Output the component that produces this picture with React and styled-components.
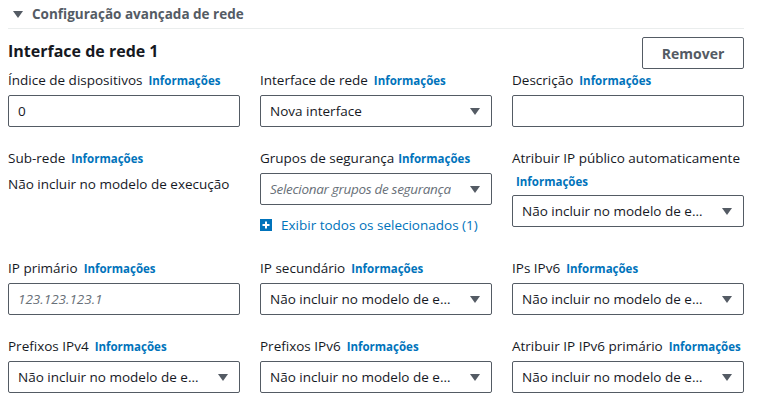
import React from "react";
import styled, { createGlobalStyle } from "styled-components";

const GlobalStyle = createGlobalStyle`
    body {
        margin: 0;
        background: #ffffff;
        font-family: "Open Sans", "Noto Sans", sans-serif;
        color: #16191f;
    }
`;

const Page = styled.div`
    padding: 0 21px 0 8px;
`;

const SectionToggle = styled.div`
    display: flex;
    align-items: center;
    gap: 9px;
    height: 28px;
    padding-left: 5px;
    border-bottom: 1px solid #eaeded;
    font-size: 13.5px;
    font-weight: 700;
    color: #545b64;
`;

const Caret = styled.span`
    width: 0;
    height: 0;
    border-left: 5px solid transparent;
    border-right: 5px solid transparent;
    border-top: 7px solid #545b64;
    margin-top: 1px;
`;

const HeaderRow = styled.div`
    display: flex;
    justify-content: space-between;
    align-items: flex-start;
    padding-top: 8px;
    height: 32px;
`;

const Title = styled.h2`
    margin: 0;
    margin-top: 2px;
    font-size: 16px;
    line-height: 24px;
    font-weight: 700;
    color: #16191f;
`;

const Button = styled.button`
    width: 102px;
    height: 32px;
    border: 1px solid #545b64;
    border-radius: 2px;
    background: #ffffff;
    color: #545b64;
    font-family: inherit;
    font-size: 14px;
    font-weight: 700;
    cursor: pointer;
`;

const Grid = styled.div`
    display: grid;
    grid-template-columns: repeat(3, 232px);
    column-gap: 20px;
    row-gap: 20px;
`;

const Field = styled.div`
    display: flex;
    flex-direction: column;
`;

const Label = styled.div`
    height: ${(p) => (p.$wrap ? "46px" : "22px")};
    font-size: 13.5px;
    line-height: ${(p) => (p.$wrap ? "23px" : "22px")};
    margin-bottom: ${(p) => (p.$wrap ? "2px" : "4px")};
    color: #16191f;
    white-space: nowrap;
`;

const Info = styled.a`
    display: ${(p) => (p.$block ? "block" : "inline")};
    margin-left: ${(p) => (p.$block ? "4px" : "6px")};
    line-height: ${(p) => (p.$block ? "23px" : "1")};
    font-size: 11.5px;
    font-weight: 700;
    color: #0073bb;
    text-decoration: none;
`;

const Input = styled.div`
    box-sizing: border-box;
    height: 32px;
    border: 1px solid #545b64;
    border-radius: 2px;
    padding: 0 9px;
    display: flex;
    align-items: center;
    font-size: 13.5px;
    color: ${(p) => (p.$placeholder ? "#687078" : "#16191f")};
    font-style: ${(p) => (p.$placeholder ? "italic" : "normal")};
`;

const Select = styled(Input)`
    justify-content: space-between;
    padding-right: 11px;
    gap: ${(p) => (p.$placeholder ? "8px" : "14px")};
`;

const SelectText = styled.span`
    overflow: hidden;
    text-overflow: ellipsis;
    white-space: nowrap;
    letter-spacing: ${(p) => (p.$tight ? "-0.3px" : "0")};
`;

const Arrow = styled.span`
    flex: none;
    width: 0;
    height: 0;
    border-left: 5px solid transparent;
    border-right: 5px solid transparent;
    border-top: 7px solid #545b64;
`;

const StaticValue = styled.div`
    font-size: 13.5px;
    line-height: 22px;
`;

const ExpandLink = styled.div`
    display: flex;
    align-items: center;
    gap: 9px;
    margin-top: 9px;
    padding-bottom: 1px;
    font-size: 13.5px;
    line-height: 22px;
    color: #0073bb;
`;

const PlusBox = () => (
    <svg width="12" height="12" viewBox="0 0 12 12">
        <rect width="12" height="12" fill="#0073bb" />
        <path d="M6 2.5v7M2.5 6h7" stroke="#fff" strokeWidth="2" />
    </svg>
);

const NOT_INCLUDED = "Não incluir no modelo de execução";

const SelectBox = ({ children, placeholder }) => (
    <Select $placeholder={placeholder}>
        <SelectText $tight={placeholder}>{children}</SelectText>
        <Arrow />
    </Select>
);

const App = () => {
    return (
        <Page>
            <GlobalStyle />
            <SectionToggle>
                <Caret />
                Configuração avançada de rede
            </SectionToggle>
            <HeaderRow>
                <Title>Interface de rede 1</Title>
                <Button>Remover</Button>
            </HeaderRow>
            <Grid>
                <Field>
                    <Label>Índice de dispositivos<Info>Informações</Info></Label>
                    <Input>0</Input>
                </Field>
                <Field>
                    <Label>Interface de rede<Info>Informações</Info></Label>
                    <SelectBox>Nova interface</SelectBox>
                </Field>
                <Field>
                    <Label>Descrição<Info>Informações</Info></Label>
                    <Input />
                </Field>

                <Field>
                    <Label>Sub-rede<Info>Informações</Info></Label>
                    <StaticValue>{NOT_INCLUDED}</StaticValue>
                </Field>
                <Field>
                    <Label>Grupos de segurança<Info style={{ marginLeft: 4 }}>Informações</Info></Label>
                    <SelectBox placeholder>Selecionar grupos de segurança</SelectBox>
                    <ExpandLink>
                        <PlusBox />
                        Exibir todos os selecionados (1)
                    </ExpandLink>
                </Field>
                <Field>
                    <Label $wrap>
                        Atribuir IP público automaticamente
                        <Info $block>Informações</Info>
                    </Label>
                    <SelectBox>{NOT_INCLUDED}</SelectBox>
                </Field>

                <Field>
                    <Label>IP primário<Info>Informações</Info></Label>
                    <Input $placeholder>123.123.123.1</Input>
                </Field>
                <Field>
                    <Label>IP secundário<Info>Informações</Info></Label>
                    <SelectBox>{NOT_INCLUDED}</SelectBox>
                </Field>
                <Field>
                    <Label>IPs IPv6<Info>Informações</Info></Label>
                    <SelectBox>{NOT_INCLUDED}</SelectBox>
                </Field>

                <Field>
                    <Label>Prefixos IPv4<Info>Informações</Info></Label>
                    <SelectBox>{NOT_INCLUDED}</SelectBox>
                </Field>
                <Field>
                    <Label>Prefixos IPv6<Info>Informações</Info></Label>
                    <SelectBox>{NOT_INCLUDED}</SelectBox>
                </Field>
                <Field>
                    <Label>Atribuir IP IPv6 primário<Info>Informações</Info></Label>
                    <SelectBox>{NOT_INCLUDED}</SelectBox>
                </Field>
            </Grid>
        </Page>
    );
};

export default App;
